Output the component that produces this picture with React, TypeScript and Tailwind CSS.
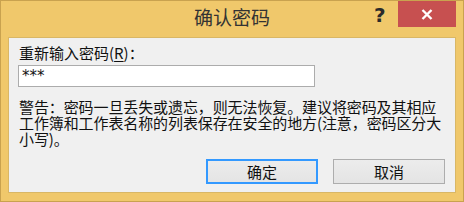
export default function App() {
  const font = { fontFamily: '"Noto Sans CJK SC", "Noto Sans", sans-serif' };
  return (
    <div
      className="w-[464px] h-[202px] bg-[#f0c86b] border border-[#c9a24f] flex flex-col text-[#111]"
      style={font}
    >
      {/* title bar */}
      <div className="relative h-[36px] shrink-0">
        <div className="absolute inset-x-0 top-[3px] text-center text-[19px] leading-[26px] text-[#333]">
          确认密码
        </div>
        <div className="absolute left-[373px] top-[3px] text-[20px] leading-[22px] font-bold text-[#2a2a2a]" style={{ fontFamily: '"DejaVu Sans", sans-serif' }}>
          ?
        </div>
        <div className="absolute left-[397px] top-0 w-[58px] h-[26px] bg-[#c75050] flex items-center justify-center">
          <svg width="12" height="11" viewBox="0 0 12 11">
            <path d="M1.5 1 L10.5 10 M10.5 1 L1.5 10" stroke="#fff" strokeWidth="2.4" />
          </svg>
        </div>
      </div>

      {/* client area */}
      <div className="mx-[7px] h-[156px] bg-[#f0f0f0] border border-[#d9b766] flex flex-col">
        <div className="ml-[10px] mt-[6px] text-[15px] leading-[17px]">
          重新输入密码(<span className="underline underline-offset-2">R</span>)：
        </div>
        <div className="ml-[9px] mt-[4px] w-[297px] h-[22px] bg-white border border-[#acacac] flex items-center pl-[3px] text-[15px] leading-none" style={{ fontFamily: '"DejaVu Sans", sans-serif' }}>
          ***
        </div>
        <div className="ml-[10px] mt-[12px] text-[15px] leading-[16px] tracking-[-0.1px]">
          <div>警告：密码一旦丢失或遗忘，则无法恢复。建议将密码及其相应</div>
          <div>工作簿和工作表名称的列表保存在安全的地方(注意，密码区分大</div>
          <div>小写)。</div>
        </div>
        <div className="mt-auto mb-[8px] flex justify-end gap-[15px] pr-[10px]">
          <button className="w-[112px] h-[25px] bg-gradient-to-b from-[#ececec] to-[#e4e4e4] border border-[#3399ff] shadow-[inset_0_0_0_1px_#3399ff] text-[15px] leading-none">
            确定
          </button>
          <button className="w-[112px] h-[25px] bg-gradient-to-b from-[#ececec] to-[#e4e4e4] border border-[#adadad] text-[15px] leading-none">
            取消
          </button>
        </div>
      </div>
    </div>
  );
}
